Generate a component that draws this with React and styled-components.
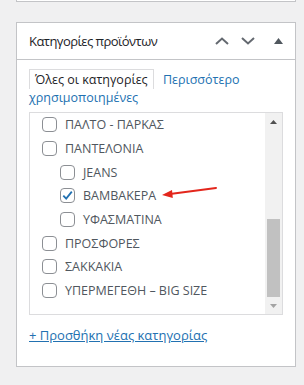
import React from 'react';
import styled, { createGlobalStyle } from 'styled-components';

const GlobalStyle = createGlobalStyle`
    html, body {
        margin: 0;
        padding: 0;
        background: #f0f0f1;
    }
    body {
        font-family: "Open Sans", "Noto Sans", sans-serif;
        font-size: 13px;
        color: #3c434a;
    }
`

const categories = [
    { name: "ΠΑΛΤΟ - ΠΑΡΚΑΣ", level: 0 },
    { name: "ΠΑΝΤΕΛΟΝΙΑ", level: 0 },
    { name: "JEANS", level: 1 },
    { name: "ΒΑΜΒΑΚΕΡΑ", level: 1, checked: true },
    { name: "ΥΦΑΣΜΑΤΙΝΑ", level: 1 },
    { name: "ΠΡΟΣΦΟΡΕΣ", level: 0 },
    { name: "ΣΑΚΚΑΚΙΑ", level: 0 },
    { name: "ΥΠΕΡΜΕΓΕΘΗ – BIG SIZE", level: 0 },
]

const App = () => {
    return (
        <Page>
            <GlobalStyle />
            <TopBox />
            <Postbox>
                <Header>
                    <Title>Κατηγορίες προϊόντων</Title>
                    <HandleButton $w={26}>
                        <svg width="14" height="8" viewBox="0 0 14 8">
                            <path d="M1 7 L7 1.5 L13 7" fill="none" stroke="#646970" strokeWidth="2" />
                        </svg>
                    </HandleButton>
                    <HandleButton $w={26}>
                        <svg width="14" height="8" viewBox="0 0 14 8">
                            <path d="M1 1 L7 6.5 L13 1" fill="none" stroke="#646970" strokeWidth="2" />
                        </svg>
                    </HandleButton>
                    <HandleButton $w={34}>
                        <svg width="9" height="6" viewBox="0 0 9 6">
                            <path d="M0 6 L4.5 0 L9 6 Z" fill="#50575e" />
                        </svg>
                    </HandleButton>
                </Header>
                <Inside>
                    <Tabs>
                        <ActiveTab>Όλες οι κατηγορίες</ActiveTab>{" "}
                        <OtherTab>Περισσότερο χρησιμοποιημένες</OtherTab>
                    </Tabs>
                    <Panel>
                        <List>
                            {categories.map((c) => (
                                <Row key={c.name} $level={c.level}>
                                    <Check>
                                        {c.checked && (
                                            <svg width="13" height="13" viewBox="0 0 13 13">
                                                <path d="M2.3 6.6 L5.2 9.6 L10.8 2.6" fill="none" stroke="#2271b1" strokeWidth="1.8" />
                                            </svg>
                                        )}
                                    </Check>
                                    <Label>{c.name}</Label>
                                </Row>
                            ))}
                        </List>
                        <Scrollbar>
                            <ScrollArrow>
                                <svg width="7" height="4" viewBox="0 0 7 4">
                                    <path d="M0 4 L3.5 0 L7 4 Z" fill="#505050" />
                                </svg>
                            </ScrollArrow>
                            <Track>
                                <Thumb />
                            </Track>
                            <ScrollArrow>
                                <svg width="7" height="4" viewBox="0 0 7 4">
                                    <path d="M0 0 L3.5 4 L7 0 Z" fill="#a3a3a3" />
                                </svg>
                            </ScrollArrow>
                        </Scrollbar>
                    </Panel>
                    <AddLink href="#">+ Προσθήκη νέας κατηγορίας</AddLink>
                </Inside>
            </Postbox>
            <Pointer width="60" height="16" viewBox="0 0 60 16">
                <path d="M56 5 L10 11" fill="none" stroke="#e3261c" strokeWidth="2" strokeLinecap="round" />
                <path d="M2 12 L12 7 L12.8 15 Z" fill="#e3261c" />
            </Pointer>
        </Page>
    );
}

export default App;

const Page = styled.div`
    position: relative;
    width: 304px;
    height: 385px;
    padding: 0 8px 0 16px;
    box-sizing: border-box;
    overflow: hidden;
`

const TopBox = styled.div`
    width: 278px;
    height: 1px;
    background: #fff;
    border: 1px solid #c3c4c7;
    border-top: none;
`

const Postbox = styled.div`
    margin-top: 20px;
    width: 280px;
    box-sizing: border-box;
    background: #fff;
    border: 1px solid #c3c4c7;
`

const Header = styled.div`
    display: flex;
    align-items: center;
    height: 36px;
    border-bottom: 1px solid #c3c4c7;
`

const Title = styled.h2`
    flex: 1;
    margin: 0;
    padding: 0 0 0 12px;
    font-size: 13px;
    letter-spacing: -0.55px;
    font-weight: 400;
    color: #1d2327;
    line-height: 1.4;
`

const HandleButton = styled.span`
    width: ${({ $w }) => $w}px;
    height: 36px;
    display: flex;
    align-items: center;
    justify-content: center;
`

const Inside = styled.div`
    padding: 9px 12px 22px 12px;
`

const Tabs = styled.div`
    line-height: 18px;
    font-size: 12.5px;
`

const ActiveTab = styled.span`
    display: inline-block;
    padding: 1px 5px 0 5px;
    border: 1px solid #dcdcde;
    border-bottom: none;
    color: #1d2327;
`

const OtherTab = styled.span`
    margin-left: 6px;
    color: #2271b1;
`

const Panel = styled.div`
    margin-top: 5px;
    height: 201px;
    display: flex;
    border: 1px solid #dcdcde;
`

const List = styled.div`
    flex: 1;
    display: flex;
    flex-direction: column;
`

const Row = styled.div`
    height: 23.7px;
    display: flex;
    align-items: center;
    padding-left: ${({ $level }) => 12 + $level * 18}px;
`

const Check = styled.span`
    width: 15px;
    height: 15px;
    box-sizing: border-box;
    border: 1px solid #8c8f94;
    border-radius: 4px;
    background: #fff;
    display: flex;
    align-items: center;
    justify-content: center;
    margin-right: 8px;
`

const Label = styled.span`
    font-size: 12.5px;
    color: #50575e;
    white-space: nowrap;
`

const Scrollbar = styled.div`
    width: 17px;
    display: flex;
    flex-direction: column;
    background: #f1f1f1;
`

const ScrollArrow = styled.div`
    height: 17px;
    display: flex;
    align-items: center;
    justify-content: center;
`

const Track = styled.div`
    flex: 1;
    display: flex;
    flex-direction: column;
    justify-content: flex-end;
    padding: 0 2px;
`

const Thumb = styled.div`
    height: 78px;
    background: #c1c1c1;
`

const AddLink = styled.a`
    display: inline-block;
    margin-top: 11px;
    font-size: 13px;
    line-height: 18px;
    color: #2271b1;
    text-decoration: underline;
`

const Pointer = styled.svg`
    position: absolute;
    left: 160px;
    top: 183px;
`
